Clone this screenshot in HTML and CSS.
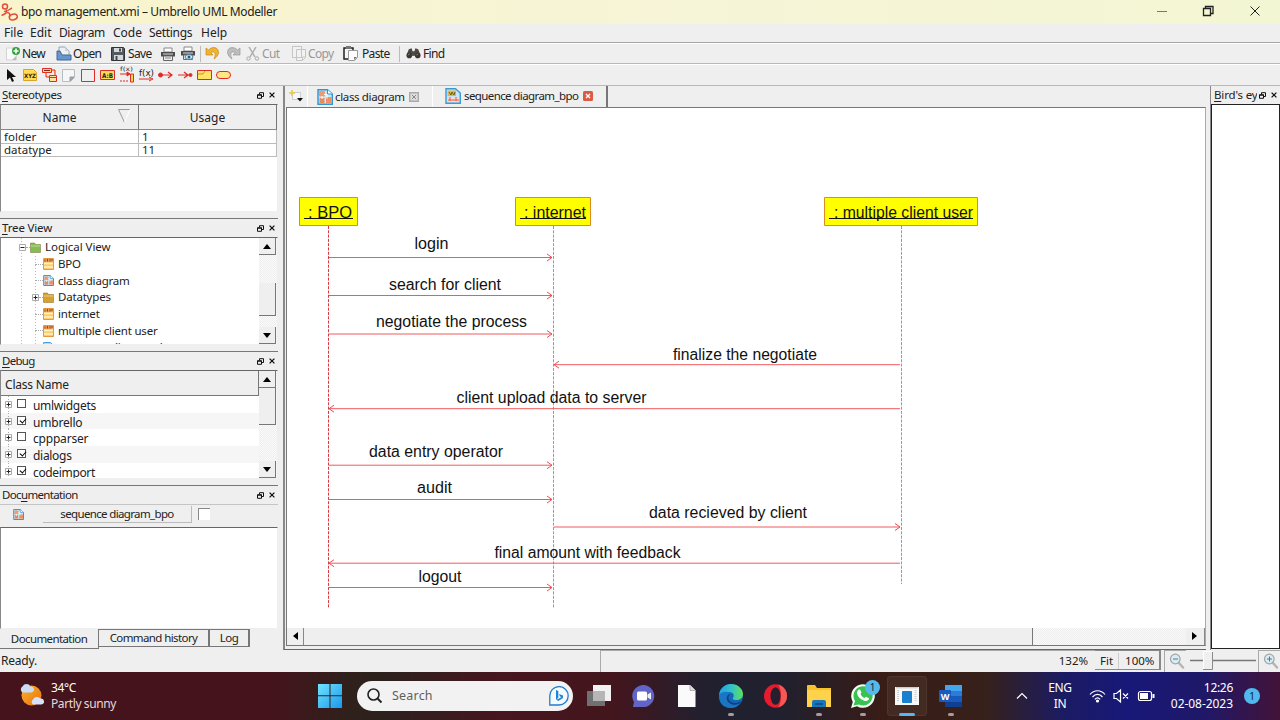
FILE: index.html
```html
<!DOCTYPE html>
<html lang="en">
<head>
<meta charset="utf-8">
<title>bpo management.xmi – Umbrello UML Modeller</title>
<link rel="stylesheet" href="styles.css">
</head>
<body>
<svg class="defs" width="0" height="0">
  <symbol id="float" viewBox="0 0 7 7"><path d="M2.5 2V.7h4v3.8H5M.5 2.7h4v3.6h-4zM.5 3.2h4" fill="none" stroke="#111"/></symbol>
  <symbol id="close" viewBox="0 0 6 6"><path d="M.6.6l4.8 4.8M5.4.6L.6 5.4" stroke="#111" stroke-width="1.3"/></symbol>
  <symbol id="diagram" viewBox="0 0 16 16"><path d="M1 .7h9.5L15.3 5v10.3H1z" fill="#c9e8fa" stroke="#2d94d8" stroke-width="1.4"/><path d="M10.5.7V5h4.8" fill="#fff" stroke="#2d94d8"/><rect x="2" y="2" width="6" height="5.500" rx="1" fill="#ef9a68"/><rect x="2.500" y="9" width="5" height="5" fill="#e58a5c"/><path d="M9 8h5.500v6H9z" fill="#ef9062"/><path d="M7 5.500h3v4M5 7v3" stroke="#fff" fill="none"/></symbol>
  <symbol id="seq" viewBox="0 0 16 16"><path d="M1 .7h9.500L15.300 5v10.300H1z" fill="#c9e5f6" stroke="#369bd8" stroke-width="1.400"/><path d="M2.500 2.500h8.500v5.500H2.500z" fill="#dcb855"/><path d="M4 4l2 3 1-3 2 3 1-3" fill="none" stroke="#666022"/><path d="M3 10h11v3H3z" fill="#f9ddd0"/><path d="M3 12h11M5 9v4M11 9v4" stroke="#ea5845"/></symbol>
  <symbol id="class" viewBox="0 0 11 12"><path d="M.5.5h10v11H.5z" fill="#ffc96d" stroke="#e29a42"/><path d="M1 1h9v3H1z" fill="#f39a52"/><path d="M2 1.500v2M4.500 1v2.500M7 1v2.500M9 1v2" stroke="#8a4a28"/><path d="M1 5.500h9M1 9h9" stroke="#fff6c3" stroke-width="1.300"/></symbol>
  <symbol id="folder" viewBox="0 0 11 11"><path d="M.5 10.500V1h4l1 1.500h5v8z" fill="currentColor" stroke="#7c6930" stroke-width=".5"/><path d="M.8 4h9.500" stroke="#fff" stroke-opacity=".45"/></symbol>
  <symbol id="plus" viewBox="0 0 7 7"><path d="M.5.5h6v6h-6z" fill="#fff" stroke="#aaa"/><path d="M1.500 3.500h4M3.500 1.500v4" stroke="#222"/></symbol>
  <symbol id="minus" viewBox="0 0 7 7"><path d="M.5.5h6v6h-6z" fill="#fff" stroke="#aaa"/><path d="M1.500 3.500h4" stroke="#222"/></symbol>
  <symbol id="printer" viewBox="0 0 14 14"><path d="M3 1h8v4H3z" fill="#fff" stroke="#888"/><path d="M0 5h14v4.500H0z" fill="#4c4c4c"/><path d="M2 7h10" stroke="#ddd"/><path d="M2.500 9h9v4.500h-9z" fill="#eee" stroke="#666"/><path d="M4 11h6" stroke="#888"/></symbol>
  <symbol id="mag" viewBox="0 0 16 16"><path d="M9.500 9.500l4.500 5" stroke="#b9b4ac" stroke-width="2.500" stroke-linecap="round"/><circle cx="6.300" cy="6" r="4.800" fill="#dcebf2" stroke="#9aa6ab" stroke-width="1.200"/></symbol>
</svg>

<header class="titlebar">
  <svg class="app" width="17" height="20" viewBox="0 0 17 20"><g fill="none" stroke="#e0503f" stroke-width="1.500"><circle cx="4" cy="4.500" r="2.500"/><path d="M5 7.500c2 3 0 4-4.500 6M3 9.500c4 0 5-2 8-3.500M6 10.500c3 0 3 2 2.500 4.500"/><ellipse cx="12.300" cy="15" rx="4" ry="2.800" transform="rotate(-12 12.300 15)"/></g></svg>
  <span class="title">bpo management.xmi – Umbrello UML Modeller</span>
  <svg class="winbtns" width="110" height="24" viewBox="0 0 110 24" fill="none" stroke="#222"><path d="M3 11.500h10" stroke="#777"/><path d="M49.500 8.500h7v7h-7zM51.500 8V6.500h7.500v7h-2" stroke-width="1.300"/><path d="M96.500 6.500l9 9M105.500 6.500l-9 9"/></svg>
</header>

<nav class="menubar"><span class="m1">File</span><span class="m2">Edit</span><span class="m3">Diagram</span><span class="m4">Code</span><span class="m5">Settings</span><span class="m6">Help</span></nav>

<div class="toolbar main-tools">
  <div class="tool t-new"><svg width="16" height="16" viewBox="0 0 16 16"><path d="M1.500 2h10v12h-10z" fill="#fafafa" stroke="#d4d4d4"/><path d="M7 14l4-4v4z" fill="#bbb"/><circle cx="11" cy="5" r="4" fill="#35a13c"/><path d="M8.500 5h5M11 2.500v5" stroke="#fff" stroke-width="1.600"/></svg><span>New</span></div>
  <div class="tool t-open"><svg width="16" height="16" viewBox="0 0 16 16"><path d="M3 1h6l4 4v6H3z" fill="#eef1f3" stroke="#94a6b5"/><path d="M9 1v4h4" fill="#ccd4da"/><path d="M1 14V5h3l2 4h9v5z" fill="#6696cb" stroke="#41699b"/></svg><span>Open</span></div>
  <div class="tool t-save"><svg width="14" height="14" viewBox="0 0 14 14"><path d="M.5.5h12l1 1v12H.5z" fill="#54595f" stroke="#30343a"/><path d="M3 1h8v4H3zM3 8h9v5H3z" fill="#d6d9dc"/><path d="M8 1.500h2v3H8zM4.500 9h2v4h-2z" fill="#44494e"/></svg><span>Save</span></div>
  <svg class="t-print" width="14" height="14"><use href="#printer"/></svg>
  <svg class="t-preview" width="15" height="15" viewBox="0 0 15 15"><use href="#printer" width="14" height="14"/><ellipse cx="8" cy="11" rx="4" ry="2.500" fill="#d8ecf7" stroke="#477da5"/><circle cx="8" cy="11" r="1.500" fill="#285b80"/></svg>
  <i class="vsep s1"></i>
  <svg class="t-undo" width="16" height="14" viewBox="0 0 16 14"><path d="M1 1v7h7L5.800 5.700C9 3.500 12 6 9 12c5-3 6-9 2-11C8.500 0 5.500.8 3.500 3z" fill="#eeb52e" stroke="#c9871d" stroke-width=".7"/></svg>
  <svg class="t-redo" width="16" height="14" viewBox="0 0 16 14"><path transform="matrix(-1 0 0 1 16 0)" d="M1 1v7h7L5.800 5.700C9 3.500 12 6 9 12c5-3 6-9 2-11C8.500 0 5.500.8 3.500 3z" fill="#bdbdbd" stroke="#999" stroke-width=".7"/></svg>
  <div class="tool t-cut off"><svg width="14" height="14" viewBox="0 0 14 14" fill="none" stroke="#aaa"><path d="M3 0l6 10M10 0L4 10" stroke-width="1.400"/><circle cx="2.500" cy="11.500" r="1.700"/><circle cx="11" cy="11.500" r="1.700"/></svg><span>Cut</span></div>
  <div class="tool t-copy off"><svg width="14" height="15" viewBox="0 0 14 15" fill="#f2f2f2" stroke="#c5c5c5"><path d="M.5.5h9v11h-9zM4.500 3.500h9v8l-3 3h-6z"/><path d="M10.500 14v-3h3"/></svg><span>Copy</span></div>
  <div class="tool t-paste"><svg width="15" height="15" viewBox="0 0 15 15"><path d="M1 2h9v11H1z" fill="#f5f5f5" stroke="#222" stroke-width="1.500"/><path d="M3 0h5v3H3z" fill="#777"/><path d="M5.500 4.500h9v7l-3 3h-6z" fill="#fff" stroke="#999"/><path d="M11 14v-3h3z" fill="#777"/></svg><span>Paste</span></div>
  <i class="vsep s2"></i>
  <div class="tool t-find"><svg width="15" height="11" viewBox="0 0 16 11"><path d="M1 6l2-5 3-1 1 3h2l1-3 3 1 2 5z" fill="#4d4842"/><circle cx="3.500" cy="7.500" r="3" fill="#3b3632"/><circle cx="12.500" cy="7.500" r="3" fill="#3b3632"/><path d="M6 4h4v4H6z" fill="#514b45"/><path d="M2 7l2-1M11 7l2-1" stroke="#888"/></svg><span>Find</span></div>
</div>

<div class="toolbar uml-tools">
  <svg width="240" height="20" viewBox="0 0 240 20" fill="none" stroke="#e02b25" font-family="DejaVu Sans">
    <path d="M7 4v11l3-2.500 2 4.500 2-1-2-4h4z" fill="#111" stroke="none"/>
    <path d="M23.500 4.500h10l3 3v8h-13z" fill="#ffdd4f" stroke="#d7a52d"/><text x="24" y="13" font-size="6" font-weight="bold" stroke="none" fill="#222" textLength="12" lengthAdjust="spacingAndGlyphs">XYZ</text>
    <path d="M42.500 3.500h9v4h-9z" fill="#ffdc57"/><path d="M49.500 10.500h7v6h-7zM49 12.500h8M46 8v4h3M52 5h3v5" fill="#ffe29b"/><path d="M44 5.500h6" stroke="#742f19"/>
    <path d="M62.500 4.500h12v8l-4 4h-8z" fill="#f4f6f7" stroke="#b5bdc0"/><path d="M70 16v-4h4z" fill="#aaa" stroke="#999"/>
    <path d="M81.500 4.500h13v12h-13z"/>
    <path d="M100.500 5.500h14v9h-14z" fill="#ffdc59"/><text x="102" y="12.500" font-size="6.500" font-weight="bold" stroke="none" fill="#222" textLength="11" lengthAdjust="spacingAndGlyphs">A:B</text>
    <text x="120" y="6" font-size="6" stroke="none" fill="#333" textLength="13" lengthAdjust="spacingAndGlyphs">f(x)</text><path d="M120 9h9M130.500 9v8h3V9z" fill="#ffd74d"/><path d="M120 16h8" stroke-dasharray="2 1"/><path d="M127 7l3 2-3 2z" fill="#e02b25"/>
    <text x="139" y="11" font-size="8" stroke="none" fill="#222" textLength="15" lengthAdjust="spacingAndGlyphs">f(x)</text><path d="M139 14h12M149 12l4 2-4 2"/>
    <path d="M160 10h11M168 7l4 3-4 3" stroke-width="1.200"/><circle cx="160.500" cy="10" r="2" fill="#e02b25"/><path d="M178 10h12M184 7l4 3-4 3" stroke-width="1.200"/><circle cx="190.500" cy="10" r="1.500" fill="#e02b25"/>
    <path d="M197.500 5.500h14v9h-14z" fill="#ffe469"/><path d="M198 9h5l2-3" stroke="#c69716"/>
    <rect x="216.500" y="6.500" width="14" height="7" rx="3.500" fill="#ffe784"/>
  </svg>
</div>

<main class="work">
  <aside class="left">
    <section class="dock stereo">
      <div class="dock-title"><span class="dt1"><u>S</u>tereotypes</span><svg width="7" height="7"><use href="#float"/></svg><svg width="6" height="6"><use href="#close"/></svg></div>
      <div class="sunken">
        <div class="table">
          <div class="th">Name<svg width="13" height="14" viewBox="0 0 13 14"><path d="M12 .5H.5l6 13" fill="none" stroke="#999"/><path d="M6.500 13.500L12 .5" stroke="#fff"/></svg></div><div class="th">Usage</div>
          <div class="td">folder</div><div class="td">1</div>
          <div class="td last">datatype</div><div class="td last">11</div>
        </div>
      </div>
    </section>

    <section class="dock">
      <div class="dock-title"><span class="dt2"><u>T</u>ree View</span><svg width="7" height="7"><use href="#float"/></svg><svg width="6" height="6"><use href="#close"/></svg></div>
      <div class="sunken split">
        <div class="tree">
          <div class="node root"><svg width="7" height="7"><use href="#minus"/></svg><i></i><svg class="green" width="11" height="11"><use href="#folder"/></svg><span class="n0">Logical View</span></div>
          <div class="node"><i></i><svg width="11" height="12"><use href="#class"/></svg><span>BPO</span></div>
          <div class="node"><i></i><svg width="11" height="11"><use href="#diagram"/></svg><span class="n2">class diagram</span></div>
          <div class="node branch"><svg width="7" height="7"><use href="#plus"/></svg><i></i><svg class="gold" width="11" height="11"><use href="#folder"/></svg><span class="n3">Datatypes</span></div>
          <div class="node"><i></i><svg width="11" height="12"><use href="#class"/></svg><span class="n4">internet</span></div>
          <div class="node"><i></i><svg width="11" height="12"><use href="#class"/></svg><span class="n5">multiple client user</span></div>
          <div class="node"><i></i><svg width="11" height="11"><use href="#seq"/></svg><span class="n6">sequence diagram_bpo</span></div>
        </div>
        <div class="vscroll"><b class="up"></b><b class="thumb th-tree"></b><b class="down"></b></div>
      </div>
    </section>

    <section class="dock">
      <div class="dock-title"><span class="dt3"><u>D</u>ebug</span><svg width="7" height="7"><use href="#float"/></svg><svg width="6" height="6"><use href="#close"/></svg></div>
      <div class="sunken split">
        <div class="checks">
          <div class="check-head">Class Name</div>
          <div class="check"><svg width="7" height="7"><use href="#plus"/></svg><b></b><span class="c1">umlwidgets</span></div>
          <div class="check alt"><svg width="7" height="7"><use href="#plus"/></svg><b class="on"></b><span class="c2">umbrello</span></div>
          <div class="check"><svg width="7" height="7"><use href="#plus"/></svg><b></b><span class="c3">cppparser</span></div>
          <div class="check alt"><svg width="7" height="7"><use href="#plus"/></svg><b class="on"></b><span class="c4">dialogs</span></div>
          <div class="check"><svg width="7" height="7"><use href="#plus"/></svg><b class="on"></b><span class="c5">codeimport</span></div>
        </div>
        <div class="vscroll"><b class="up"></b><b class="thumb th-debug"></b><b class="down"></b></div>
      </div>
    </section>

    <section class="dock docs">
      <div class="dock-title"><span class="dt4">Doc<u>u</u>mentation</span><svg width="7" height="7"><use href="#float"/></svg><svg width="6" height="6"><use href="#close"/></svg></div>
      <div class="doc-head"><svg width="11" height="11"><use href="#diagram"/></svg><div class="doc-name">sequence diagram_bpo</div><b></b></div>
      <div class="sunken"></div>
      <div class="dock-tabs"><span class="active">Documentation</span><span class="k2">Command history</span><span class="k3">Log</span></div>
    </section>
  </aside>

  <section class="center">
    <div class="tabs">
      <svg class="newtab" width="15" height="14" viewBox="0 0 15 14"><path d="M3.500 2.500h8v7h-8z" fill="#f7f7f7" stroke="#ccc"/><path d="M3 0v6M0 3h6" stroke="#e5cb43" stroke-width="1.500"/><path d="M8 8h6l-3 3.500z" fill="#111"/></svg>
      <div class="tab one"><svg width="16" height="16"><use href="#diagram"/></svg><span>class diagram</span><svg width="10" height="10" viewBox="0 0 10 10"><path d="M.7.7h8.600v8.600H.7z" fill="#ddd" stroke="#aaa" stroke-width="1.400"/><path d="M3 3l4 4M7 3L3 7" stroke="#888"/></svg></div>
      <div class="tab two"><svg width="16" height="16"><use href="#seq"/></svg><span>sequence diagram_bpo</span><svg width="10" height="10" viewBox="0 0 10 10"><rect width="10" height="10" rx="1.500" fill="#dc5945"/><path d="M3 3l4 4M7 3L3 7" stroke="#fff" stroke-width="1.400"/></svg></div>
    </div>
    <div class="canvas">
      <svg width="918" height="520" viewBox="287 108 918 520">
        <defs>
          <g id="ar"><path d="M-6-3.500L-1 0l-5 3.500" fill="none" stroke="#ee4d52"/></g>
          <g id="al"><path d="M6-3.500L1 0l5 3.500" fill="none" stroke="#ee4d52"/></g>
        </defs>
        <g class="life"><path d="M328.500 226v382"/><path class="soft" d="M553.500 226v382"/><path class="soft" d="M901.500 226v358"/></g>
        <g class="msg"><path d="M329 257.500h223M329 295.500h223M329 334h223M554 364.700h346M329 408.700h571M329 465.200h223M329 499.500h223M554 527h346M329 563.200h571M329 587.500h223"/></g>
        <use href="#ar" x="553" y="257.500"/><use href="#ar" x="553" y="295.500"/><use href="#ar" x="553" y="334"/><use href="#al" x="553" y="364.700"/><use href="#al" x="328" y="408.700"/><use href="#ar" x="553" y="465.200"/><use href="#ar" x="553" y="499.500"/><use href="#ar" x="901" y="527"/><use href="#al" x="328" y="563.200"/><use href="#ar" x="553" y="587.500"/>
        <g class="obj"><path d="M299.500 197.500h58v28h-58zM515.500 197.500h75v28h-75zM824.500 197.500h153v28h-153z"/></g>
        <path d="M304 218.500h49M520 218.500h66M829 218.500h144" stroke="#111"/>
        <g class="lbl">
          <text x="308" y="217.500" textLength="44" lengthAdjust="spacingAndGlyphs">: BPO</text><text x="524" y="217.500" textLength="62" lengthAdjust="spacingAndGlyphs">: internet</text><text x="834" y="217.500" textLength="139" lengthAdjust="spacingAndGlyphs">: multiple client user</text>
          <text x="414.500" y="249" textLength="34" lengthAdjust="spacingAndGlyphs">login</text><text x="389" y="289.500" textLength="112" lengthAdjust="spacingAndGlyphs">search for client</text><text x="376" y="326.500" textLength="151" lengthAdjust="spacingAndGlyphs">negotiate the process</text>
          <text x="673" y="359.500" textLength="144" lengthAdjust="spacingAndGlyphs">finalize the negotiate</text><text x="456.500" y="403" textLength="190" lengthAdjust="spacingAndGlyphs">client upload data to server</text><text x="369" y="457" textLength="134" lengthAdjust="spacingAndGlyphs">data entry operator</text>
          <text x="417" y="492.500" textLength="35" lengthAdjust="spacingAndGlyphs">audit</text><text x="649" y="517.500" textLength="158" lengthAdjust="spacingAndGlyphs">data recieved by client</text><text x="494.500" y="557.500" textLength="186" lengthAdjust="spacingAndGlyphs">final amount with feedback</text><text x="418.500" y="582" textLength="43" lengthAdjust="spacingAndGlyphs">logout</text>
        </g>
      </svg>
      <div class="hscroll"><b class="lf"></b><b class="bar"></b><b class="gap"></b><b class="rt"></b></div>
    </div>
  </section>

  <aside class="right">
    <div class="dock-title"><span class="bird"><u>B</u>ird's eye</span><svg width="7" height="7"><use href="#float"/></svg><svg width="6" height="6"><use href="#close"/></svg></div>
    <div class="birdview"></div>
  </aside>
</main>

<footer class="status">
  <span class="ready">Ready.</span>
  <div class="field"><span>132%</span></div>
  <div class="zoombtns"><span class="fit">Fit</span><span>100%</span></div>
  <div class="mag"><svg width="16" height="16"><use href="#mag"/><path d="M4 6h5" stroke="#477d9c"/></svg></div>
  <svg class="slider" width="70" height="20" viewBox="0 0 70 20"><path d="M2 9.500h66" stroke="#777" stroke-width="1.300"/><path d="M15.500.5h9v17h-9z" fill="#efefef"/><path d="M15.500 18V.5h9" fill="none" stroke="#fff"/><path d="M15 18.500h9.500V1" fill="none" stroke="#8a8a8a"/></svg>
  <div class="mag"><svg width="16" height="16"><use href="#mag"/><path d="M4 6h5M6.500 3.500v5" stroke="#477d9c"/></svg></div>
</footer>

<div class="taskbar">
  <svg class="weather" width="26" height="26" viewBox="0 0 26 26"><defs><linearGradient id="sun" x2="1" y2="1"><stop stop-color="#f9b22c"/><stop offset="1" stop-color="#e9720f"/></linearGradient></defs><circle cx="13.500" cy="12.500" r="10" fill="url(#sun)"/><path d="M4.500 9.500a3.500 3.500 0 010-6 4.500 4.500 0 018 0 3 3 0 011 6z" fill="#cbdcf6"/><path d="M15 21.500a3 3 0 010-5 4.500 4.500 0 017.500-1 3 3 0 011 6z" fill="#d6e1fa"/></svg>
  <div class="wtext"><span class="deg">34°C</span><span class="sunny">Partly sunny</span></div>
  <svg class="start" width="24" height="24" viewBox="0 0 24 24"><defs><linearGradient id="wg" x2="1" y2="1"><stop stop-color="#70e4fc"/><stop offset="1" stop-color="#1898ee"/></linearGradient></defs><path d="M0 0h11.500v11.300H0zM12.500 0H24v11.300H12.500zM0 12.300h11.500V24H0zM12.500 12.300H24V24H12.500z" fill="url(#wg)"/></svg>
  <div class="search"><svg width="16" height="16" viewBox="0 0 16 16"><circle cx="6.500" cy="6.500" r="5.500" fill="none" stroke="#222" stroke-width="1.600"/><path d="M10.500 10.500l4 4" stroke="#222" stroke-width="1.900"/></svg><span>Search</span><svg class="bing" width="20" height="20" viewBox="0 0 20 20"><path d="M.8 19V10A9.200 9.200 0 1110 19z" fill="#f4fafe" stroke="#247bd0" stroke-width="1.300"/><path d="M7 4l2.300 1v7L7 13.500zM7 13.500l2.300 1.500 4.700-3V9.500L10 8l1 2.500 1.500.5-3.200 2z" fill="#1c83d8"/></svg></div>
  <div class="apps">
    <div class="app-slot"><svg width="24" height="22" viewBox="0 0 24 22"><path d="M0 6h18v15H0z" fill="#707070"/><path d="M6 0h18v16H6z" fill="#f1f1f1"/><path d="M6 6h12v10H6z" fill="#b6b6b6"/></svg></div>
    <div class="app-slot"><svg width="23" height="24" viewBox="0 0 23 24"><path d="M1 23l1-5A11 11 0 1112 23z" fill="#6264c6"/><rect x="5" y="7.500" width="10" height="9" rx="1.500" fill="#fff"/><path d="M15.500 10.500l3.500-2v7l-3.500-2z" fill="#eee"/></svg></div>
    <div class="app-slot"><svg width="18" height="22" viewBox="0 0 18 22"><path d="M0 0h12l5.500 5.500V22H0z" fill="#fafafa"/><path d="M12 0v5.500h5.500" fill="#ddd" stroke="#999" stroke-width=".7"/></svg></div>
    <div class="app-slot run"><svg width="24" height="24" viewBox="0 0 24 24"><defs><linearGradient id="e1"><stop stop-color="#279ee5"/><stop offset=".5" stop-color="#31c1c9"/><stop offset="1" stop-color="#62df58"/></linearGradient></defs><circle cx="12" cy="12" r="12" fill="#1467b8"/><path d="M0 11C1 4 6 0 12 0c7 0 12 5 12 10 0 4-3 6-7 6-3 0-4-1-2.500-3 1-2-.5-5-4.500-5-5 0-8 2-10 3z" fill="url(#e1)"/><path d="M0 11c3-4 10-4 13-1-4-1-6 2-5 5 1 5 7 7 12 5-3 4-9 5-13 3C2 21 0 17 0 11z" fill="#1976c4"/><path d="M12 10c-4 2-3 6 0 8 3 2 7 1 10-1l-1 2c-4 3-11 2-13-3-1-3 1-6 4-6z" fill="#133e7d"/></svg></div>
    <div class="app-slot"><svg width="23" height="24" viewBox="0 0 23 24"><ellipse cx="11.500" cy="12" rx="11.500" ry="11.800" fill="#e61b2d"/><path d="M14 .5c12 3 12 20 0 23 4-4 4-19 0-23z" fill="#f35a55"/><ellipse cx="11.500" cy="12" rx="5" ry="8.800" fill="#24202f"/></svg></div>
    <div class="app-slot run"><svg width="24" height="23" viewBox="0 0 24 23"><path d="M0 3V1Q0 0 1 0h7l2 3h14v19H0z" fill="#f6c12b"/><path d="M0 5h24v17H0z" fill="#ffd24c"/><path d="M5 22v-5q0-2 2-2h10q2 0 2 2v5z" fill="#1875bd"/><path d="M8 19h8" stroke="#0d548f" stroke-width="2"/></svg></div>
    <div class="app-slot run"><svg width="24" height="24" viewBox="0 0 24 24"><path d="M0 24l1.800-6A11.800 11.800 0 116 22.200z" fill="#f5fff6"/><path d="M2.500 21.500L4 17a9.600 9.600 0 114 3.500z" fill="#38c351"/><path d="M7 6l2-.5 1.500 3-1 1.500c1 2 2 3 4 4l1.500-1.300 3 1.600c0 2-2 3.200-4 2.700C9 15.500 6 12 6 8.500z" fill="#fff"/></svg><em>1</em></div>
    <div class="app-slot current"><svg width="24" height="18" viewBox="0 0 24 18"><path d="M0 0h24v18H0z" fill="#f8f8f8"/><path d="M1 .8h22" stroke="#bbb"/><rect x="7" y="4" width="10" height="12" rx="1" fill="#1980cf"/><path d="M3 3v12M20.500 3v12" stroke="#d0d0d0" stroke-width="2" stroke-dasharray="1 1"/></svg></div>
    <div class="app-slot run"><svg width="24" height="22" viewBox="0 0 24 22"><path d="M6 0h17v6H6z" fill="#42a5ee"/><path d="M6 6h17v5H6z" fill="#2b7cd3"/><path d="M6 11h17v6H6z" fill="#185abd"/><path d="M6 17h17v5H6z" fill="#103f91"/><rect y="5" width="12" height="12" rx="1" fill="#185abd"/><text x="6" y="14.500" fill="#fff" font-family="Open Sans" font-weight="bold" font-size="9" text-anchor="middle">W</text></svg></div>
  </div>
  <div class="tray">
    <svg class="chev" width="12" height="8" viewBox="0 0 12 8"><path d="M1 6.500l5-5 5 5" fill="none" stroke="#fff" stroke-width="1.200"/></svg>
    <div class="lang"><span>ENG</span><span>IN</span></div>
    <svg class="net" width="66" height="16" viewBox="0 0 66 16" fill="none" stroke="#fff" stroke-width="1.200"><path d="M1 6.500c4-5 11-5 15 0M3.500 9c3-3.500 7-3.500 10 0M5.800 11.300c2-2 3.500-2 5.400 0"/><circle cx="8.500" cy="13" r="1" fill="#fff"/><path d="M25 5.500h2.500l4-3.500v12l-4-3.500H25zM34 5.500l5 5M39 5.500l-5 5"/><rect x="49.500" y="3.500" width="13" height="9" rx="2"/><path d="M51 5h8v6h-8z" fill="#fff" stroke="none"/><path d="M64.500 6v4" stroke-width="2"/></svg>
    <div class="clock"><span class="time">12:26</span><span class="date">02-08-2023</span></div>
    <em class="notif">1</em>
  </div>
</div>
</body>
</html>
```

FILE: styles.css
```css
* { box-sizing: border-box; }
body { margin: 0; width: 1280px; height: 720px; overflow: hidden; display: flex; flex-direction: column; background: #efefef; color: #222; font: 12px/16px "Noto Sans", "Open Sans", sans-serif; }
svg { display: block; flex: none; }
.defs { position: absolute; }
span { white-space: nowrap; }
b, i, em { display: block; font-style: normal; font-weight: normal; flex: none; }
u { text-underline-offset: 2px; text-decoration-thickness: 1px; }

.titlebar { height: 24px; flex: none; display: flex; align-items: center; background: linear-gradient(90deg, #f9f4cc, #f7f4d7 50%, #f3f6d3); }
.titlebar .app { margin-left: 1px; }
.title { margin-left: 3px; letter-spacing: -.38px; }
.winbtns { margin-left: auto; margin-right: 16px; }

.menubar { height: 19px; flex: none; display: flex; align-items: center; padding-left: 4px; border-bottom: 1px solid #a6a6a6; }
.menubar span { width: 26px; }
.menubar .m2 { width: 29px; }
.menubar .m3 { width: 54px; letter-spacing: -.4px; }
.menubar .m4 { width: 36px; }
.menubar .m5 { width: 52px; letter-spacing: -.3px; }

.toolbar { flex: none; display: flex; align-items: center; border-bottom: 1px solid #b9b9b9; }
.main-tools { height: 21px; padding-left: 5px; letter-spacing: -.65px; border-top: 1px solid #fff; }
.tool { display: flex; align-items: center; gap: 2px; }
.t-new { width: 51px; gap: 1px; }
.t-open { width: 55px; gap: 1px; }
.t-save { width: 50px; gap: 3px; }
.t-preview { margin-left: 6px; }
.vsep { width: 1px; height: 16px; background: #bcbcbc; }
.s1 { margin: 0 4px; }
.t-redo { margin: 0 5px 0 4px; }
.t-cut { width: 46px; }
.t-copy { width: 51px; }
.t-paste { width: 56px; gap: 4px; }
.off { color: #989898; }
.s2 { margin-right: 6px; }
.uml-tools { height: 22px; border-top: 1px solid #fff; }

.work { height: 564px; flex: none; display: flex; }
.left { width: 278px; flex: none; display: grid; grid-template-rows: 133px 133px 134px 164px; }
.dock { display: flex; flex-direction: column; padding-bottom: 6px; border-bottom: 1px solid #777; overflow: hidden; }
.docs { padding: 0; border: 0; }
.dock-title { height: 18px; flex: none; display: flex; align-items: center; padding: 0 3px 0 2px; font-size: 11.500px; letter-spacing: -.4px; }
.dock-title span { margin-right: auto; }
.dock-title .dt2 { letter-spacing: -.15px; }
.dock-title .dt3 { letter-spacing: -.7px; }
.dock-title .dt4 { letter-spacing: -.65px; }
.dock-title svg:nth-of-type(2) { margin-left: 5px; }
.sunken { flex: 1; min-height: 0; overflow: hidden; background: #fff; border: 1px solid #888; border-top-color: #666; border-right-color: #efefef; border-bottom-color: #efefef; }
.split { display: flex; }
.table { display: grid; grid-template-columns: 138px 138px; grid-template-rows: 25px 14px 13px; font-size: 11.500px; }
.th { background: #efefef; border-right: 1px solid #777; border-bottom: 1px solid #888; display: flex; align-items: center; justify-content: center; position: relative; font-size: 12px; padding-top: 2px; }
.th:first-child { padding-right: 20px; }
.th svg { position: absolute; right: 7px; top: 4px; }
.td { border-right: 1px solid #bbb; border-bottom: 1px solid #bbb; padding-left: 3px; line-height: 13px; }
.last { line-height: 11px; }

.tree { flex: 1; overflow: hidden; padding-top: 1px; background: repeating-linear-gradient(#bbb 0 1px, transparent 1px 3px) 20px 0/1px 100% no-repeat, repeating-linear-gradient(#bbb 0 1px, transparent 1px 3px) 34px 18px/1px 100% no-repeat; }
.node { height: 16.700px; display: flex; align-items: center; padding-left: 34px; font-size: 11.500px; letter-spacing: -.2px; }
.node i { width: 8px; height: 0; border-top: 1px dotted #aaa; }
.node span { margin-left: 4px; }
.node .n0 { letter-spacing: -.05px; }
.root { padding-left: 18px; }
.root i { width: 4px; }
.branch { padding-left: 31px; }
.branch i { width: 4px; }
.green { color: #85bd52; }
.gold { color: #d9a02c; }
.vscroll { width: 18px; flex: none; display: flex; flex-direction: column; background: repeating-conic-gradient(#eee 0 25%, #fafafa 0 50%) 0 0/2px 2px; }
.up, .down { width: 17px; height: 17px; background: #efefef; border-right: 1px solid #777; border-bottom: 1px solid #777; }
.up::before, .down::before { content: ""; display: block; width: 0; height: 0; margin: 6px 0 0 4px; border: 4.500px solid transparent; border-top: 0; border-bottom: 5px solid #000; }
.down { margin-top: auto; }
.down::before { border: 4.500px solid transparent; border-top: 5px solid #000; border-bottom: 0; }
.thumb { width: 17px; background: #efefef; border-right: 1px solid #777; border-bottom: 1px solid #777; }
.th-tree { height: 33px; margin-top: 28px; }
.th-debug { height: 37px; }

.checks { flex: 1; overflow: hidden; }
.check-head { height: 25px; padding: 6px 0 0 4px; background: #efefef; border-right: 1px solid #777; border-bottom: 1px solid #777; letter-spacing: -.2px; }
.check { height: 16.700px; display: flex; align-items: center; padding: 3px 0 0 4px; letter-spacing: -.2px; background: repeating-linear-gradient(#aaa 0 1px, transparent 1px 3px) 7px 0/1px 100% no-repeat; }
.check svg { margin-top: -3px; }
.alt { background-color: #f6f6f6; }
.check b { width: 9px; height: 9px; margin: -5px 7px 0 5px; border: 1px solid #555; background: #fff; }
.check .c1, .check .c4, .check .c5 { letter-spacing: -.3px; }
.check .c5 { letter-spacing: -.35px; }
.on::before { content: ""; display: block; width: 3px; height: 5px; margin: 0 0 0 3px; border: solid #000; border-width: 0 1.500px 1.500px 0; transform: rotate(42deg); }

.doc-head { height: 23px; flex: none; display: flex; align-items: center; padding: 0 0 4px 13px; border-top: 1px solid #c5c5c5; }
.doc-name { width: 149px; height: 17px; margin: 0 6px 0 19px; text-align: center; font-size: 11.500px; line-height: 16px; letter-spacing: -.65px; border: solid #bbb; border-width: 0 1px 1px 0; }
.doc-head b { width: 12px; height: 12px; background: #fff; border: solid #888; border-width: 1px 0 0 1px; }
.dock-tabs { height: 21px; flex: none; display: flex; align-items: flex-start; font-size: 11.500px; letter-spacing: -.6px; }
.dock-tabs span { height: 18px; text-align: center; border: solid #777; border-width: 1px 2px 1px 0; }
.dock-tabs .active { width: 99px; height: 20px; padding-top: 2px; border-width: 0 1px 1px 0; }
.k2 { width: 111px; }
.k3 { width: 40px; }

.center { width: 923px; margin-left: 5px; flex: none; border-left: 2px solid #888; border-bottom: 1px solid #666; }
.tabs { height: 21px; display: flex; align-items: center; font-size: 11.500px; letter-spacing: -.35px; padding-left: 4px; }
.tab { display: flex; align-items: center; height: 21px; }
.tab span { margin: 0 4px 0 2px; }
.one { width: 126px; margin-left: 3px; padding-left: 9px; border-left: 1px solid #fff; border-right: 1px solid #fff; }
.two { width: 175px; padding: 0 0 2px 12px; border-right: 2px solid #777; }
.two span { letter-spacing: -.6px; margin-left: 3px; margin-right: 5px; }
.canvas { height: 539px; margin-left: 1px; border: 1px solid #777; border-right-color: #aaa; background: #fff; }
.life path { stroke: #d83a43; stroke-width: 1; stroke-dasharray: 3 1.300; }
.life .soft { stroke: #e5777d; }
.msg path { stroke: #f05a5f; fill: none; }
.obj path { fill: #ff0; stroke: #dc8d22; }
.lbl { font: 15.800px "Liberation Sans", Arial, sans-serif; fill: #111; }
.hscroll { height: 17px; display: flex; background: #efefef; }
.lf, .rt { width: 17px; padding: 4px 0 0 6px; border-right: 1px solid #888; }
.lf::before, .rt::before { content: ""; display: block; width: 0; border: 4.500px solid transparent; border-left: 0; border-right: 5px solid #000; }
.rt::before { border: 4.500px solid transparent; border-left: 5px solid #000; border-right: 0; }
.rt { width: 19px; }
.bar { width: 729px; border-right: 1px solid #777; }
.gap { flex: 1; background: repeating-conic-gradient(#eee 0 25%, #f9f9f9 0 50%) 0 0/2px 2px; }
.right { width: 70px; margin-left: auto; border-left: 1px solid #888; display: flex; flex-direction: column; }
.right .dock-title { padding: 0 3px 0 3px; }
.bird { width: 43px; overflow: hidden; letter-spacing: -.15px; }
.right .dock-title svg:nth-of-type(1) { margin-left: 2px; }
.birdview { height: 545px; background: #fff; border: 1px solid #222; }

.status { height: 22px; flex: none; display: flex; align-items: stretch; }
.ready { width: 600px; padding: 3px 0 0 1px; letter-spacing: -.2px; }
.field { width: 496px; border: 1px solid #aaa; border-width: 1px 0 0 1px; padding: 2px 7px 0 0; text-align: right; font-size: 11.500px; }
.zoombtns { width: 66px; height: 20px; display: flex; padding-top: 2px; font-size: 11.500px; border: solid #888; border-width: 1px 2px 1px 0; }
.fit { width: 24px; margin-right: 6px; padding-left: 5px; border-right: 1px solid #ccc; }
.mag { width: 22px; margin-left: 3px; padding: 2px 0 0 4px; border: solid #aaa; border-width: 1px 0 0 1px; }
.slider { margin: 1px 0 0 2px; }
.slider + .mag { margin-left: 0; }

.taskbar { height: 48px; flex: none; display: flex; align-items: center; color: #fff; background: linear-gradient(90deg, #45131b 0, #45131b 21%, #30201b 27%, #2c211c 30%, #47161f 39%, #43151d 48%, #22202f 55%, #20202e 61%, #391c16 69%, #36211a 77%, #1b1b62 83%, #181879 88%, #1f1868 94%, #421338 100%); }
.weather { margin-left: 18px; }
.wtext, .lang, .clock { display: flex; flex-direction: column; }
.wtext { width: 267px; margin-left: 7px; }
.deg { letter-spacing: -.4px; }
.sunny { letter-spacing: -.4px; color: #e7d9dc; }
.search { width: 216px; height: 30px; margin-left: 15px; padding: 0 4px 0 10px; display: flex; align-items: center; border-radius: 15px; background: #f2f2f2; color: #5f5f5f; }
.search span { margin-left: 9px; font-size: 12.500px; letter-spacing: .2px; }
.bing { margin-left: auto; }
.apps { display: flex; margin-left: 4px; }
.app-slot { width: 44px; height: 48px; display: flex; align-items: center; justify-content: center; position: relative; }
.app-slot em { position: absolute; left: 24px; top: 8px; width: 15px; height: 15px; border-radius: 8px; background: #55b9f0; color: #123; font-size: 10px; line-height: 15px; text-align: center; }
.run::after, .current::after { content: ""; position: absolute; left: 19px; bottom: 4px; width: 6px; height: 3px; border-radius: 2px; background: #a49ca0; }
.current { width: 40px; height: 40px; margin: 4px 2px; border-radius: 4px; background: #432a22; box-shadow: inset 0 0 0 1px #4f362d; }
.current::after { left: 12px; bottom: 0; width: 16px; background: #55b9f0; }
.tray { display: flex; align-items: center; margin-left: 43px; }
.lang { width: 28px; margin-left: 18px; text-align: center; letter-spacing: -.3px; }
.net { margin-left: 15px; }
.clock { width: 66px; margin-left: 12px; text-align: right; letter-spacing: -.05px; }
.time { letter-spacing: -.3px; }
.notif { width: 16px; height: 16px; margin-left: 11px; border-radius: 8px; background: #52b9ed; color: #123; font-size: 10px; text-align: center; }
```
